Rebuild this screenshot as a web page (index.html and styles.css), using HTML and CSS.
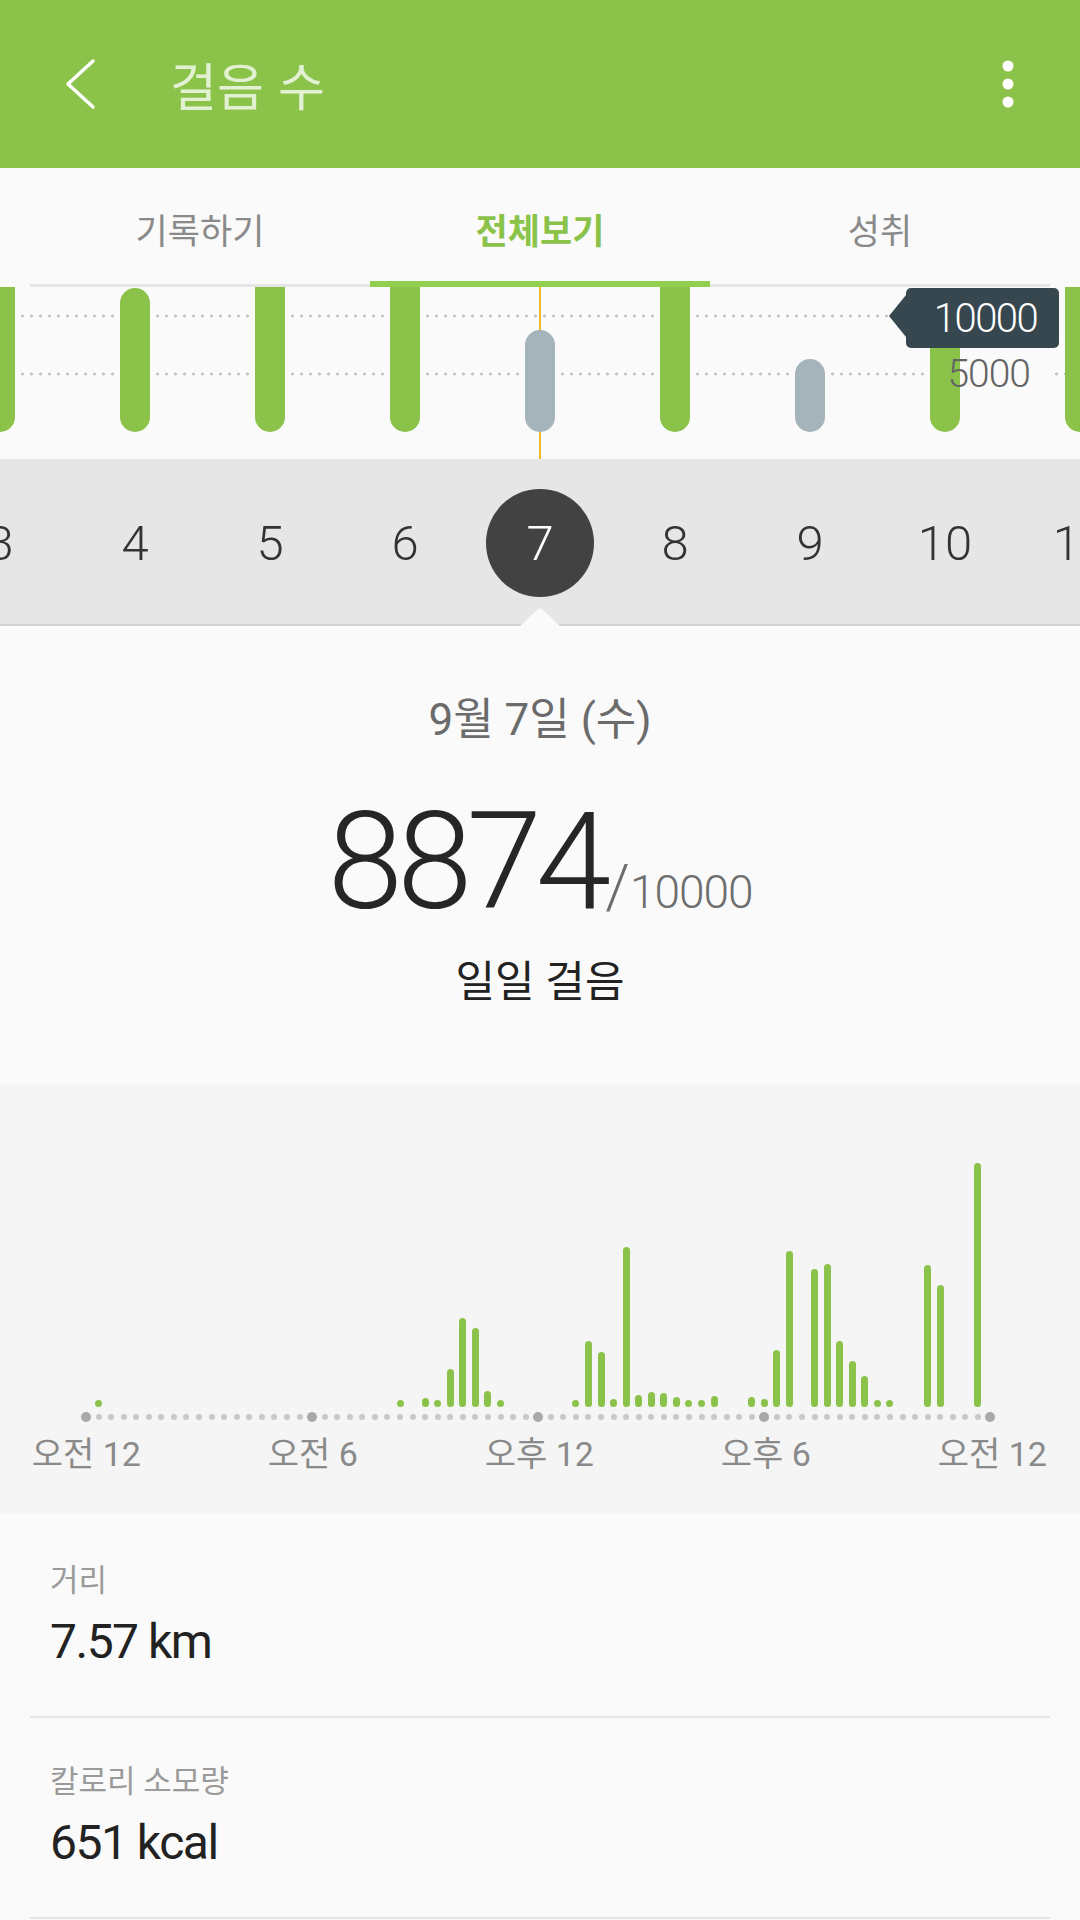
FILE: index.html
```html
<!DOCTYPE html>
<html lang="ko">
<head>
    <meta charset="UTF-8">
    <meta name="viewport" content="width=device-width, initial-scale=1.0">
    <title>걸음 수</title>
    <link rel="stylesheet" href="styles.css">
</head>
<body>
    <div class="app">
        <header class="appbar">
            <svg class="back" viewBox="0 0 48 60"><polyline points="37,7 12,30 37,53" fill="none" stroke="#fff" stroke-width="3.5" stroke-linecap="round" stroke-linejoin="round"/></svg>
            <span class="title">걸음 수</span>
            <svg class="more" viewBox="0 0 12 48"><circle cx="6" cy="6" r="5.5" fill="#fff"/><circle cx="6" cy="24" r="5.5" fill="#fff"/><circle cx="6" cy="42" r="5.5" fill="#fff"/></svg>
        </header>

        <nav class="tabs">
            <div class="tab-row">
                <div class="tab">기록하기</div>
                <div class="tab active">전체보기</div>
                <div class="tab">성취</div>
            </div>
        </nav>

        <section class="week">
            <div class="week-chart">
                <div class="guide guide-top"></div>
                <div class="guide-row">
                    <div class="dots"></div>
                    <span class="guide-label">5000</span>
                    <div class="dots tail"></div>
                </div>
                <div class="cursor"></div>
                <div class="week-bars">
                    <div class="day-col"><div class="day-bar" style="height:160px"></div></div>
                    <div class="day-col"><div class="day-bar" style="height:144px"></div></div>
                    <div class="day-col"><div class="day-bar" style="height:160px"></div></div>
                    <div class="day-col"><div class="day-bar" style="height:160px"></div></div>
                    <div class="day-col"><div class="day-bar under" style="height:102px"></div></div>
                    <div class="day-col"><div class="day-bar" style="height:160px"></div></div>
                    <div class="day-col"><div class="day-bar under" style="height:73px"></div></div>
                    <div class="day-col"><div class="day-bar" style="height:120px"></div></div>
                    <div class="day-col"><div class="day-bar" style="height:160px"></div></div>
                </div>
                <div class="goal-tip">10000</div>
            </div>
            <div class="days-strip">
                <div class="week-days">
                    <div class="day-num"><span>3</span></div>
                    <div class="day-num"><span>4</span></div>
                    <div class="day-num"><span>5</span></div>
                    <div class="day-num"><span>6</span></div>
                    <div class="day-num selected"><span>7</span></div>
                    <div class="day-num"><span>8</span></div>
                    <div class="day-num"><span>9</span></div>
                    <div class="day-num"><span>10</span></div>
                    <div class="day-num"><span>11</span></div>
                </div>
                <svg class="notch" viewBox="0 0 40 20"><path d="M0 20 L17 4 Q20 1 23 4 L40 20 Z" fill="#fafafa"/></svg>
            </div>
        </section>

        <section class="summary">
            <div class="date">9월 7일 (수)</div>
            <div class="count">
                <span class="count-value">8874</span><span class="count-slash">/</span><span class="count-goal">10000</span>
            </div>
            <div class="daily">일일 걸음</div>
        </section>

        <section class="hourly">
            <div class="hour-bars" id="hour-bars"></div>
            <div class="hour-labels">
                <span class="hour-label">오전 12</span>
                <span class="hour-label">오전 6</span>
                <span class="hour-label">오후 12</span>
                <span class="hour-label">오후 6</span>
                <span class="hour-label">오전 12</span>
            </div>
        </section>

        <section class="stats">
            <div class="stat">
                <div class="stat-label">거리</div>
                <div class="stat-value">7.57 km</div>
            </div>
            <div class="stat">
                <div class="stat-label">칼로리 소모량</div>
                <div class="stat-value">651 kcal</div>
            </div>
        </section>
    </div>
    <script>
        var steps = {
            1: 6, 25: 6, 27: 9, 28: 6, 29: 38, 30: 89, 31: 79, 32: 16, 33: 6,
            39: 6, 40: 66, 41: 55, 42: 8, 43: 160, 44: 12, 45: 15, 46: 14, 47: 10,
            48: 6, 49: 7, 50: 11, 53: 10, 54: 8, 55: 57, 56: 156, 58: 138, 59: 143,
            60: 66, 61: 46, 62: 31, 63: 6, 64: 6, 67: 142, 68: 122, 71: 244
        };

        var grid = document.getElementById("hour-bars");
        for (var i = 0; i <= 72; i++) {
            var slot = document.createElement("div");
            slot.className = "slot";
            if (steps[i]) {
                var bar = document.createElement("div");
                bar.className = "hour-bar";
                bar.style.height = steps[i] + "px";
                slot.appendChild(bar);
            }
            var tick = document.createElement("div");
            tick.className = "tick-wrap";
            var dot = document.createElement("span");
            dot.className = (i % 18 == 0) ? "tick major" : "tick";
            tick.appendChild(dot);
            slot.appendChild(tick);
            grid.appendChild(slot);
        }
    </script>
</body>
</html>
```

FILE: styles.css
```css
body {
    margin: 0;
    background-color: #fafafa;
    font-family: Roboto, "Noto Sans CJK KR", sans-serif;
}
.app {
    width: 1080px;
}

/* app bar */
.appbar {
    height: 168px;
    background-color: #8bc34a;
    display: flex;
    align-items: center;
    padding: 0 66px 0 56px;
    box-sizing: border-box;
}
.back {
    width: 48px;
    height: 60px;
}
.title {
    flex: 1;
    margin-left: 66px;
    font-family: "Noto Sans CJK KR", sans-serif;
    font-size: 51px;
    line-height: 1;
    color: rgba(255, 255, 255, 0.76);
}
.more {
    width: 12px;
    height: 48px;
}

/* tabs */
.tabs {
    padding: 0 30px;
}
.tab-row {
    display: flex;
    height: 116px;
    border-bottom: 3px solid #e6e6e6;
}
.tab {
    flex: 1;
    position: relative;
    display: flex;
    align-items: center;
    justify-content: center;
    padding-top: 4px;
    font-family: "Noto Sans CJK KR", sans-serif;
    font-size: 35px;
    color: #8a8a8a;
}
.tab.active {
    color: #8bc34a;
    font-weight: bold;
}
.tab.active::after {
    content: "";
    position: absolute;
    left: 0;
    right: 0;
    bottom: -3px;
    height: 6px;
    background-color: #92cf4f;
}

/* week chart */
.week {
    overflow: hidden;
}
.week-chart {
    position: relative;
    height: 172px;
    overflow: hidden;
}
.guide,
.dots {
    height: 4px;
    background-image: radial-gradient(circle, #c4c4c4 1.3px, transparent 1.8px);
    background-size: 9px 4px;
}
.guide {
    position: absolute;
    left: 0;
    right: 0;
    top: 27px;
}
.guide-row {
    position: absolute;
    left: 0;
    right: 0;
    top: 62px;
    height: 50px;
    display: flex;
    align-items: center;
}
.dots {
    flex: 1;
}
.dots.tail {
    flex: none;
    width: 28px;
}
.guide-label {
    position: relative;
    z-index: 2;
    margin: 0 22px 0 21px;
    font-size: 39px;
    font-weight: 300;
    letter-spacing: -1px;
    color: #636363;
}
.cursor {
    position: absolute;
    left: 539px;
    top: 0;
    bottom: 0;
    width: 2px;
    background-color: #f5b826;
}
.week-bars {
    display: flex;
    width: 1215px;
    height: 100%;
    margin-left: -67.5px;
}
.day-col {
    flex: none;
    width: 135px;
    display: flex;
    justify-content: center;
    align-items: flex-end;
    padding-bottom: 27px;
    box-sizing: border-box;
}
.day-bar {
    position: relative;
    z-index: 1;
    width: 30px;
    border-radius: 15px;
    background-color: #8bc34a;
}
.day-bar.under {
    background-color: #a5b3ba;
}
.goal-tip {
    position: absolute;
    z-index: 3;
    left: 906px;
    top: 1px;
    width: 153px;
    height: 60px;
    border-radius: 5px;
    background-color: #37474f;
    color: #fff;
    display: flex;
    align-items: center;
    justify-content: center;
    padding-left: 6px;
    box-sizing: border-box;
    font-size: 40px;
    font-weight: 300;
    letter-spacing: -1.5px;
}
.goal-tip::before {
    content: "";
    position: absolute;
    left: -17px;
    top: 7px;
    border-right: 17px solid #37474f;
    border-top: 21px solid transparent;
    border-bottom: 21px solid transparent;
}

/* day strip */
.days-strip {
    position: relative;
    background-color: #e6e6e6;
    border-bottom: 2px solid #d2d2d2;
}
.week-days {
    display: flex;
    width: 1215px;
    height: 165px;
    margin-left: -67.5px;
    padding-top: 3px;
    box-sizing: border-box;
    align-items: center;
}
.day-num {
    flex: none;
    width: 135px;
    display: flex;
    justify-content: center;
    font-size: 49px;
    font-weight: 300;
    color: #333;
}
.day-num.selected span {
    width: 108px;
    height: 108px;
    border-radius: 50%;
    background-color: #424242;
    color: #fff;
    display: flex;
    align-items: center;
    justify-content: center;
}
.notch {
    position: absolute;
    left: 520px;
    bottom: -2px;
    width: 40px;
    height: 20px;
}

/* summary */
.summary {
    text-align: center;
    padding: 68px 0 77px;
}
.date {
    font-size: 44px;
    line-height: 52px;
    color: #6b6b6b;
}
.count {
    margin-top: 48px;
    height: 136px;
    line-height: 136px;
    color: #262626;
}
.count-value {
    font-size: 136px;
    font-weight: 300;
    letter-spacing: -6px;
}
.count-slash {
    font-size: 62px;
    font-weight: 300;
    color: #6d6d6d;
}
.count-goal {
    font-size: 46px;
    font-weight: 300;
    letter-spacing: -1px;
    color: #6d6d6d;
}
.daily {
    margin-top: 27px;
    font-size: 43px;
    line-height: 50px;
    color: #222;
}

/* hourly chart */
.hourly {
    background-color: #f5f5f5;
    padding: 60px 0 38px;
    overflow: hidden;
}
.hour-bars {
    display: grid;
    grid-template-columns: repeat(73, 12.575px);
    height: 283px;
    margin-left: 79.7px;
}
.slot {
    display: flex;
    flex-direction: column;
    justify-content: flex-end;
    align-items: center;
}
.hour-bar {
    width: 7px;
    min-height: 7px;
    border-radius: 3.5px;
    background-color: #8bc34a;
}
.tick-wrap {
    height: 20px;
    display: flex;
    align-items: center;
}
.tick {
    width: 6px;
    height: 6px;
    border-radius: 50%;
    background-color: #c8c8c8;
}
.tick.major {
    width: 10px;
    height: 10px;
    background-color: #a8a8a8;
}
.hour-labels {
    display: flex;
    margin: 7px 0 0 -27px;
}
.hour-label {
    flex: none;
    width: 226.5px;
    text-align: center;
    font-size: 34px;
    line-height: 41px;
    color: #8a8a8a;
}

/* stats */
.stats {
    padding: 0 30px;
}
.stat {
    padding: 49px 20px 46px;
    border-bottom: 2px solid #e6e6e6;
}
.stat + .stat {
    padding-top: 45px;
}
.stat-label {
    font-size: 31px;
    line-height: 38px;
    color: #9a9a9a;
}
.stat-value {
    margin-top: 14px;
    font-size: 48px;
    line-height: 56px;
    letter-spacing: -1.5px;
    color: #222;
}
```
